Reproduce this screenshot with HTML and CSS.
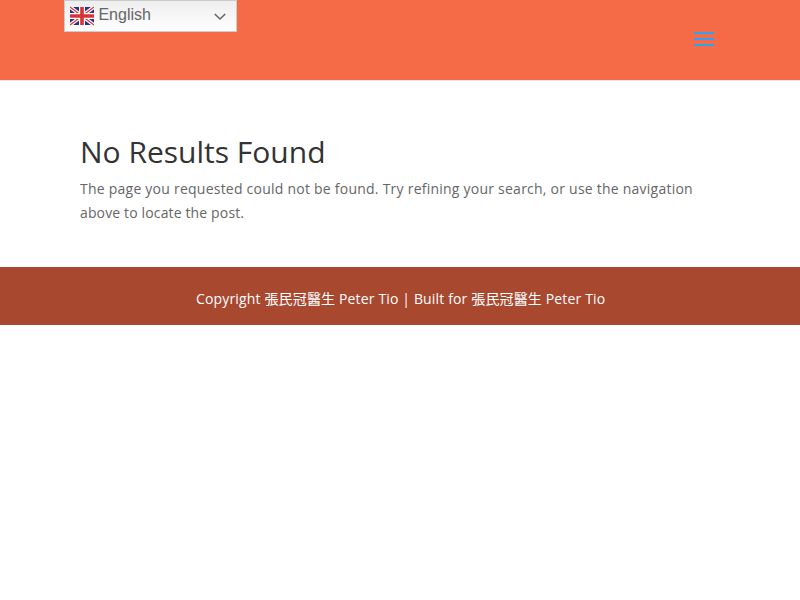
FILE: index.html
```html
<!DOCTYPE html>
<html lang="en">
<head>
<meta charset="utf-8">
<title>No Results Found</title>
<link rel="stylesheet" href="styles.css">
</head>
<body>
<header class="site-header">
  <div class="language">
    <svg class="flag" viewBox="0 0 24 24" width="24" height="24">
      <path fill="#2e2e83" d="M0 3h24v18H0z"/>
      <path stroke="#fff" stroke-width="3.6" d="M0 3l24 18M24 3L0 21"/>
      <path stroke="#d93636" stroke-width="1.2" d="M0 3l24 18M24 3L0 21"/>
      <path fill="#fff" d="M9 3h6v18H9zM0 9h24v6H0z"/>
      <path fill="#d93232" d="M10.2 3h3.6v18h-3.6zM0 10.2h24v3.6H0z"/>
    </svg>
    <span class="language-name">English</span>
    <svg class="chevron" viewBox="0 0 12 8" width="12" height="8"><path fill="none" stroke="#666" stroke-width="1.6" d="M.8 1L6 6l5.2-5"/></svg>
  </div>
  <div class="menu"><span></span><span></span><span></span></div>
</header>
<main class="content">
  <h1>No Results Found</h1>
  <p>The page you requested could not be found. Try refining your search, or use the navigation <span class="tail">above to locate the post.</span></p>
</main>
<footer class="site-footer">Copyright 張民冠醫生 Peter Tio | Built for 張民冠醫生 Peter Tio</footer>
</body>
</html>
```
FILE: styles.css
```css
* { box-sizing: border-box; }
body { margin: 0; background: #fff; color: #666; font: 14px/24px "Open Sans", "Noto Sans CJK JP", sans-serif; }
.site-header { height: 80px; background: #f56a47; box-shadow: 0 1px 0 rgba(0,0,0,.1); padding: 0 86px 0 64px; display: flex; justify-content: space-between; }
.language { width: 173px; height: 32px; border: 1px solid #ccc; background: linear-gradient(#eee, #fff); display: flex; padding: 0 11px 0 5px; }
.flag { margin-top: 3px; }
.language-name { flex: 1; margin-left: 4.45px; font: 16px/28px "Liberation Sans", sans-serif; color: #666; }
.chevron { margin-top: 12px; margin-right: -1px; }
.menu { width: 20px; margin-top: 32px; display: flex; flex-direction: column; gap: 4px; }
.menu span { height: 2px; background: #2ea3f2; }
.content { height: 187px; padding: 57px 80px 0; }
h1 { margin: 0; padding-bottom: 10px; color: #333; font-size: 30px; line-height: 30px; font-weight: 400; }
p { margin: 0; letter-spacing: .235px; }
.tail { letter-spacing: .14px; }
.site-footer { height: 58px; background: #a7482f; color: #fff; text-align: center; padding: 20px 0 0 1.4px; letter-spacing: .15px; }
```
